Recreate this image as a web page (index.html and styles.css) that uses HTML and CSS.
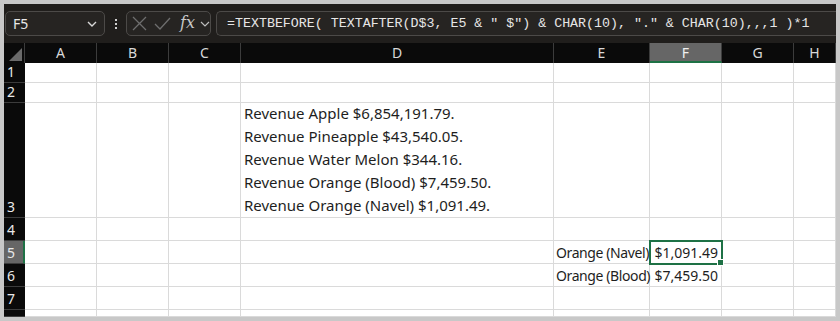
FILE: index.html
```html
<!DOCTYPE html>
<html lang="en">
<head>
  <meta charset="UTF-8">
  <title>Sheet</title>
  <link rel="stylesheet" href="styles.css">
</head>
<body>
  <div class="frame">
    <div class="toolbar">
      <div class="namebox">
        <span>F5</span>
        <svg class="chev" width="12" height="8" viewBox="0 0 12 8"><path d="M2 2 L6 6 L10 2" fill="none" stroke="#d8d8d8" stroke-width="1.4"/></svg>
      </div>
      <div class="dots"><i></i><i></i><i></i></div>
      <div class="fxbox">
        <svg width="17" height="17" viewBox="0 0 17 17"><path d="M2 2 L15 15 M15 2 L2 15" stroke="#6e6e6e" stroke-width="1.3"/></svg>
        <svg width="19" height="17" viewBox="0 0 19 17"><path d="M2 9 L7 14 L17 3" fill="none" stroke="#6e6e6e" stroke-width="1.3"/></svg>
        <span class="fx">fx</span>
        <svg width="10" height="8" viewBox="0 0 10 8"><path d="M1 2 L5 6 L9 2" fill="none" stroke="#bdbdbd" stroke-width="1.2"/></svg>
      </div>
      <div class="formula">=TEXTBEFORE( TEXTAFTER(D$3, E5 &amp; " $") &amp; CHAR(10), "." &amp; CHAR(10),,,1 )*1</div>
    </div>

    <div class="sheet">
      <div class="corner"><span></span></div>
      <div class="colhead">A</div>
      <div class="colhead">B</div>
      <div class="colhead">C</div>
      <div class="colhead">D</div>
      <div class="colhead">E</div>
      <div class="colhead active">F</div>
      <div class="colhead">G</div>
      <div class="colhead">H</div>

      <div class="rowhead">1</div>
      <div class="cell"></div><div class="cell"></div><div class="cell"></div><div class="cell"></div>
      <div class="cell"></div><div class="cell"></div><div class="cell"></div><div class="cell"></div>

      <div class="rowhead">2</div>
      <div class="cell"></div><div class="cell"></div><div class="cell"></div><div class="cell"></div>
      <div class="cell"></div><div class="cell"></div><div class="cell"></div><div class="cell"></div>

      <div class="rowhead">3</div>
      <div class="cell"></div><div class="cell"></div><div class="cell"></div>
      <div class="cell multi">
        <div>Revenue Apple $6,854,191.79.</div>
        <div>Revenue Pineapple $43,540.05.</div>
        <div>Revenue Water Melon $344.16.</div>
        <div>Revenue Orange (Blood) $7,459.50.</div>
        <div>Revenue Orange (Navel) $1,091.49.</div>
      </div>
      <div class="cell"></div><div class="cell"></div><div class="cell"></div><div class="cell"></div>

      <div class="rowhead">4</div>
      <div class="cell"></div><div class="cell"></div><div class="cell"></div><div class="cell"></div>
      <div class="cell"></div><div class="cell"></div><div class="cell"></div><div class="cell"></div>

      <div class="rowhead active">5</div>
      <div class="cell"></div><div class="cell"></div><div class="cell"></div><div class="cell"></div>
      <div class="cell label">Orange (Navel)</div>
      <div class="cell num selected">$1,091.49<span class="handle"></span></div>
      <div class="cell"></div><div class="cell"></div>

      <div class="rowhead">6</div>
      <div class="cell"></div><div class="cell"></div><div class="cell"></div><div class="cell"></div>
      <div class="cell label">Orange (Blood)</div>
      <div class="cell num">$7,459.50</div>
      <div class="cell"></div><div class="cell"></div>

      <div class="rowhead">7</div>
      <div class="cell"></div><div class="cell"></div><div class="cell"></div><div class="cell"></div>
      <div class="cell"></div><div class="cell"></div><div class="cell"></div><div class="cell"></div>

      <div class="rowhead last">8</div>
      <div class="cell"></div><div class="cell"></div><div class="cell"></div><div class="cell"></div>
      <div class="cell"></div><div class="cell"></div><div class="cell"></div><div class="cell"></div>
    </div>
  </div>
</body>
</html>
```

FILE: styles.css
```css
body {
  margin: 0;
  background-color: #c8c8c8;
  font-family: 'Noto Sans', sans-serif;
}

.frame {
  width: 832px;
  height: 313px;
  margin: 4px;
  overflow: hidden;
  background: white;
}

.toolbar {
  height: 39px;
  background-color: #201e1c;
  display: flex;
  align-items: center;
  box-sizing: border-box;
}

.namebox {
  width: 100px;
  height: 25px;
  margin-left: 1px;
  box-sizing: border-box;
  border: 1px solid #4c4a48;
  border-radius: 5px;
  background-color: #262422;
  display: flex;
  align-items: center;
  justify-content: space-between;
  padding: 0 6px 0 7px;
  color: #e8e8e8;
  font-size: 14px;
}

.dots {
  width: 21px;
  display: flex;
  flex-direction: column;
  align-items: center;
  gap: 2px;
}

.dots i {
  width: 2px;
  height: 2px;
  background-color: #d0d0d0;
}

.fxbox {
  width: 85px;
  height: 25px;
  box-sizing: border-box;
  border: 1px solid #4c4a48;
  border-radius: 5px;
  background-color: #262422;
  display: flex;
  align-items: center;
  gap: 5px;
  padding-left: 4px;
}

.fx {
  font-family: 'DejaVu Serif', serif;
  font-style: italic;
  font-size: 16px;
  color: #c8c8c8;
  margin-left: 3px;
  margin-top: -2px;
}

.formula {
  flex: 1;
  height: 25px;
  margin-left: 5px;
  box-sizing: border-box;
  border: 1px solid #4c4a48;
  border-right: none;
  border-radius: 5px 0 0 5px;
  background-color: #262422;
  padding-left: 10px;
  display: flex;
  align-items: center;
  color: #e6e6e6;
  font-family: 'Liberation Mono', monospace;
  font-size: 13.3px;
  white-space: pre;
}

.sheet {
  display: grid;
  grid-template-columns: 21px 72px 72px 72px 313px 96px 72px 72px 42px;
  grid-template-rows: 20px 20px 20px 115px 23px 23px 23px 23px 7px;
  font-size: 15px;
  color: #1e1e1e;
}

.corner {
  background-color: #0a0a0a;
  border-right: 1px solid #3c3c3c;
  position: relative;
}

.corner span {
  position: absolute;
  right: 2px;
  bottom: 2px;
  width: 0;
  height: 0;
  border-left: 13px solid transparent;
  border-bottom: 13px solid #6a6a6a;
}

.colhead {
  background-color: #0a0a0a;
  color: #d8d8d8;
  border-right: 1px solid #3c3c3c;
  text-align: center;
  line-height: 20px;
  font-size: 14px;
}

.colhead.active {
  background-color: #666666;
  color: #f0f0f0;
  border-bottom: 2px solid #1e7145;
  line-height: 19px;
}

.rowhead {
  background-color: #0a0a0a;
  color: #e8e8e8;
  border-bottom: 1px solid #3c3c3c;
  font-size: 14px;
  padding-left: 3px;
  display: flex;
  align-items: flex-end;
  line-height: 20px;
  overflow: hidden;
}

.rowhead.active {
  background-color: #666666;
  border-right: 2px solid #1e7145;
}

.rowhead.last {
  align-items: flex-start;
  padding-top: 1px;
}

.cell {
  border-right: 1px solid #dadada;
  border-bottom: 1px solid #dadada;
  box-sizing: border-box;
  padding: 0 3px;
  display: flex;
  align-items: flex-end;
  line-height: 21px;
  white-space: nowrap;
  position: relative;
}

.cell.multi {
  flex-direction: column;
  align-items: flex-start;
  justify-content: flex-end;
  line-height: 23px;
}

.cell.label {
  font-size: 14px;
  letter-spacing: -0.4px;
  padding-left: 2px;
}

.cell.num {
  font-size: 14px;
  justify-content: flex-end;
}

.cell.selected {
  outline: 2px solid #1e7145;
  outline-offset: -1px;
  z-index: 1;
}

.handle {
  position: absolute;
  right: -3px;
  bottom: -3px;
  width: 5px;
  height: 5px;
  background-color: #1e7145;
  border: 1px solid white;
}
```
